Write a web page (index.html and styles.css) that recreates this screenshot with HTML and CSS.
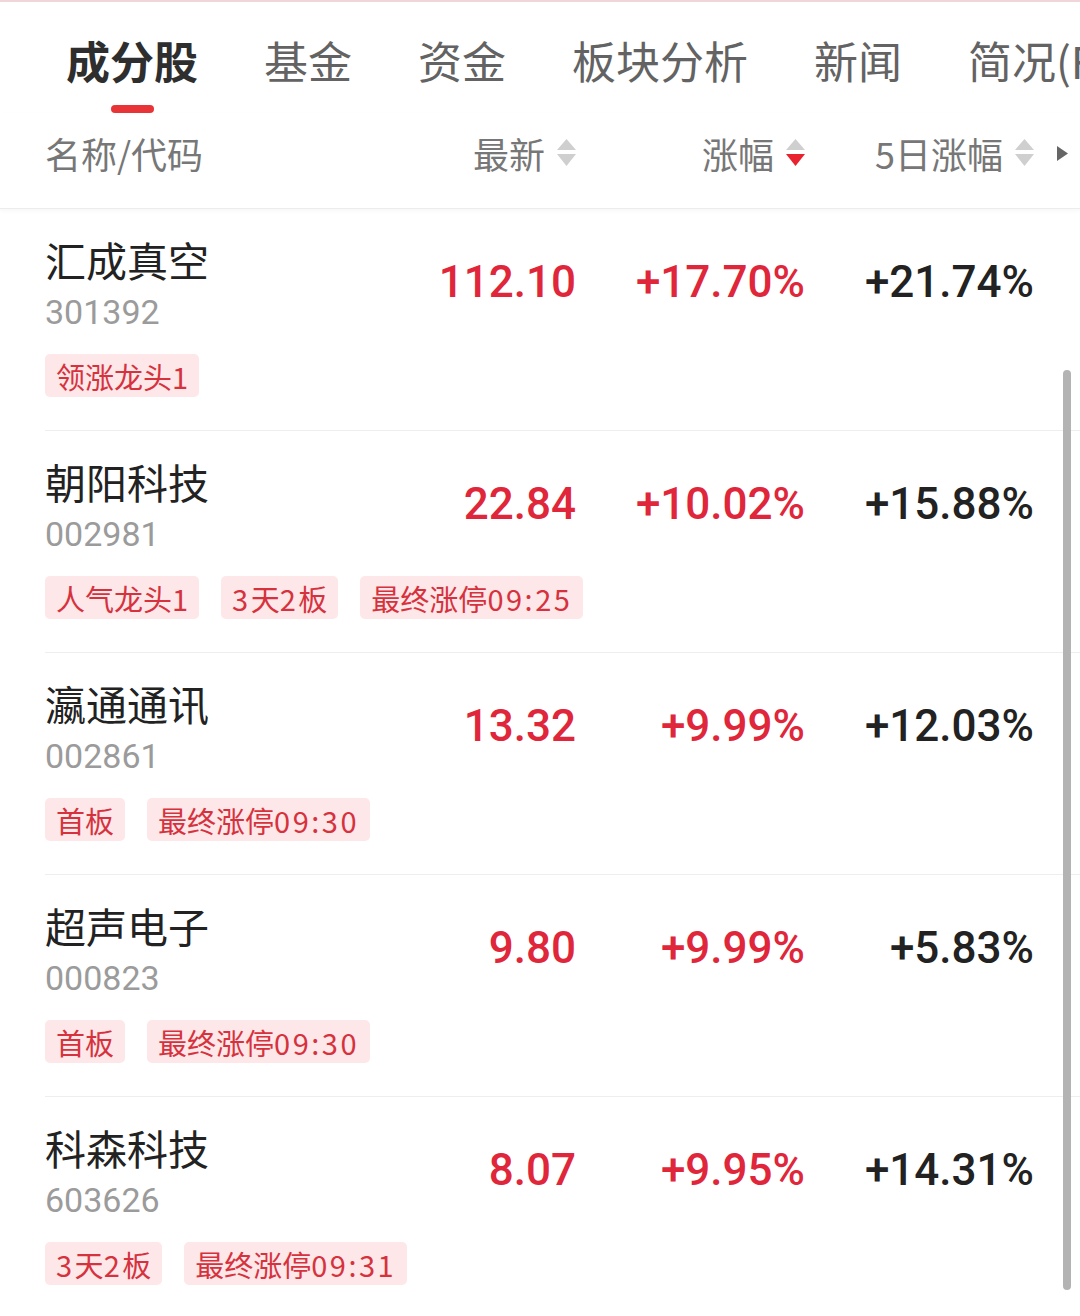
FILE: index.html
```html
<!DOCTYPE html>
<html lang="zh-CN">
<head>
<meta charset="utf-8">
<title>成分股</title>
<link rel="stylesheet" href="styles.css">
</head>
<body>
<div class="page">
  <nav class="tabs">
    <div class="tab active"><span class="tab-label">成分股</span><span class="tab-bar"></span></div>
    <div class="tab"><span class="tab-label">基金</span></div>
    <div class="tab"><span class="tab-label">资金</span></div>
    <div class="tab"><span class="tab-label">板块分析</span></div>
    <div class="tab"><span class="tab-label">新闻</span></div>
    <div class="tab"><span class="tab-label">简况(F10)</span></div>
  </nav>

  <div class="head">
    <div class="hcell hname">名称/代码</div>
    <div class="hcell">最新<svg class="sort" viewBox="0 0 19 28"><polygon points="9.5,0 19,11 0,11" fill="#cfcfcf"/><polygon points="0,15 19,15 9.5,27" fill="#cfcfcf"/></svg></div>
    <div class="hcell">涨幅<svg class="sort" viewBox="0 0 19 28"><polygon points="9.5,0 19,11 0,11" fill="#cfcfcf"/><polygon points="0,15 19,15 9.5,27" fill="#e8232f"/></svg></div>
    <div class="hcell">5日涨幅<svg class="sort" viewBox="0 0 19 28"><polygon points="9.5,0 19,11 0,11" fill="#cfcfcf"/><polygon points="0,15 19,15 9.5,27" fill="#cfcfcf"/></svg></div>
    <div class="hmore"><svg class="more" viewBox="0 0 11 15"><polygon points="0,0 11,7.5 0,15" fill="#666"/></svg></div>
  </div>

  <div class="list">
    <div class="row">
      <div class="main">
        <div class="info"><div class="name">汇成真空</div><div class="code">301392</div></div>
        <div class="num up">112.10</div>
        <div class="num up">+17.70%</div>
        <div class="num">+21.74%</div>
      </div>
      <div class="tags"><span class="tag">领涨龙头1</span></div>
    </div>
    <div class="row">
      <div class="main">
        <div class="info"><div class="name">朝阳科技</div><div class="code">002981</div></div>
        <div class="num up">22.84</div>
        <div class="num up">+10.02%</div>
        <div class="num">+15.88%</div>
      </div>
      <div class="tags"><span class="tag">人气龙头1</span><span class="tag"><span class="dg">3</span>天<span class="dg">2</span>板</span><span class="tag">最终涨停<span class="dg">09:25</span></span></div>
    </div>
    <div class="row">
      <div class="main">
        <div class="info"><div class="name">瀛通通讯</div><div class="code">002861</div></div>
        <div class="num up">13.32</div>
        <div class="num up">+9.99%</div>
        <div class="num">+12.03%</div>
      </div>
      <div class="tags"><span class="tag">首板</span><span class="tag">最终涨停<span class="dg">09:30</span></span></div>
    </div>
    <div class="row">
      <div class="main">
        <div class="info"><div class="name">超声电子</div><div class="code">000823</div></div>
        <div class="num up">9.80</div>
        <div class="num up">+9.99%</div>
        <div class="num">+5.83%</div>
      </div>
      <div class="tags"><span class="tag">首板</span><span class="tag">最终涨停<span class="dg">09:30</span></span></div>
    </div>
    <div class="row">
      <div class="main">
        <div class="info"><div class="name">科森科技</div><div class="code">603626</div></div>
        <div class="num up">8.07</div>
        <div class="num up">+9.95%</div>
        <div class="num">+14.31%</div>
      </div>
      <div class="tags"><span class="tag"><span class="dg">3</span>天<span class="dg">2</span>板</span><span class="tag">最终涨停<span class="dg">09:31</span></span></div>
    </div>
  </div>

  <div class="scrollbar"></div>
</div>
</body>
</html>
```

FILE: styles.css
```css
* { box-sizing: border-box; }

html, body {
  margin: 0;
  padding: 0;
  background: #ffffff;
}

body {
  font-family: "Noto Sans CJK SC", "Noto Sans", sans-serif;
  color: #222;
}

.page {
  position: relative;
  width: 1080px;
  height: 1316px;
  overflow: hidden;
  border-top: 2px solid #f0d6d9;
}

/* tabs */
.tabs {
  display: flex;
  gap: 66px;
  padding: 30px 0 0 66px;
  height: 111px;
  white-space: nowrap;
  overflow: hidden;
}

.tab {
  display: flex;
  flex-direction: column;
  align-items: center;
  flex-shrink: 0;
}

.tab-label {
  font-size: 44px;
  line-height: 56px;
  color: #636363;
}

.tab.active .tab-label {
  color: #2e2e2e;
  font-weight: 700;
}

.tab-bar {
  display: block;
  width: 43px;
  height: 8px;
  margin-top: 17px;
  border-radius: 4px;
  background: #e83437;
}

/* header */
.head {
  display: grid;
  grid-template-columns: 331px 200px 229px 229px 46px;
  padding: 18px 0 33px 45px;
  border-bottom: 1px solid #ececec;
  box-shadow: 0 2px 4px rgba(0, 0, 0, 0.035);
}

.hcell {
  display: flex;
  align-items: center;
  justify-content: flex-end;
  gap: 12px;
  font-size: 36px;
  line-height: 44px;
  height: 44px;
  color: #777;
}

.hcell.hname {
  justify-content: flex-start;
}

.sort {
  width: 19px;
  height: 28px;
  flex-shrink: 0;
}

.hmore {
  display: flex;
  align-items: center;
  padding-left: 23px;
  height: 44px;
}

.more {
  width: 11px;
  height: 15px;
}

/* rows */
.row {
  margin-left: 45px;
  padding: 28px 0 33px 0;
  border-bottom: 1px solid #eeeeee;
}

.main {
  display: grid;
  grid-template-columns: 331px 200px 229px 229px 46px;
  align-items: start;
}

.name {
  font-size: 41px;
  line-height: 44px;
  height: 48px;
  color: #222;
  white-space: nowrap;
}

.code {
  margin-top: 3px;
  font-family: Roboto, "Noto Sans", sans-serif;
  font-size: 34px;
  line-height: 48px;
  color: #9b9b9b;
}

.num {
  margin-top: 21px;
  text-align: right;
  font-family: Roboto, "Noto Sans", sans-serif;
  font-weight: 500;
  font-size: 44px;
  line-height: 48px;
  color: #222;
}

.num.up {
  color: #e0263a;
}

.tags {
  display: flex;
  gap: 22px;
  margin-top: 18px;
}

.tag {
  display: inline-flex;
  align-items: center;
  height: 43px;
  padding: 0 11px;
  border-radius: 5px;
  background: #fde7e9;
  color: #d6323e;
  font-size: 29px;
  white-space: nowrap;
}

.dg {
  letter-spacing: 2.5px;
}

/* scroll indicator overlay */
.scrollbar {
  position: absolute;
  left: 1063px;
  top: 368px;
  width: 8px;
  height: 920px;
  border-radius: 4px;
  background: #b3b3b3;
}
```
